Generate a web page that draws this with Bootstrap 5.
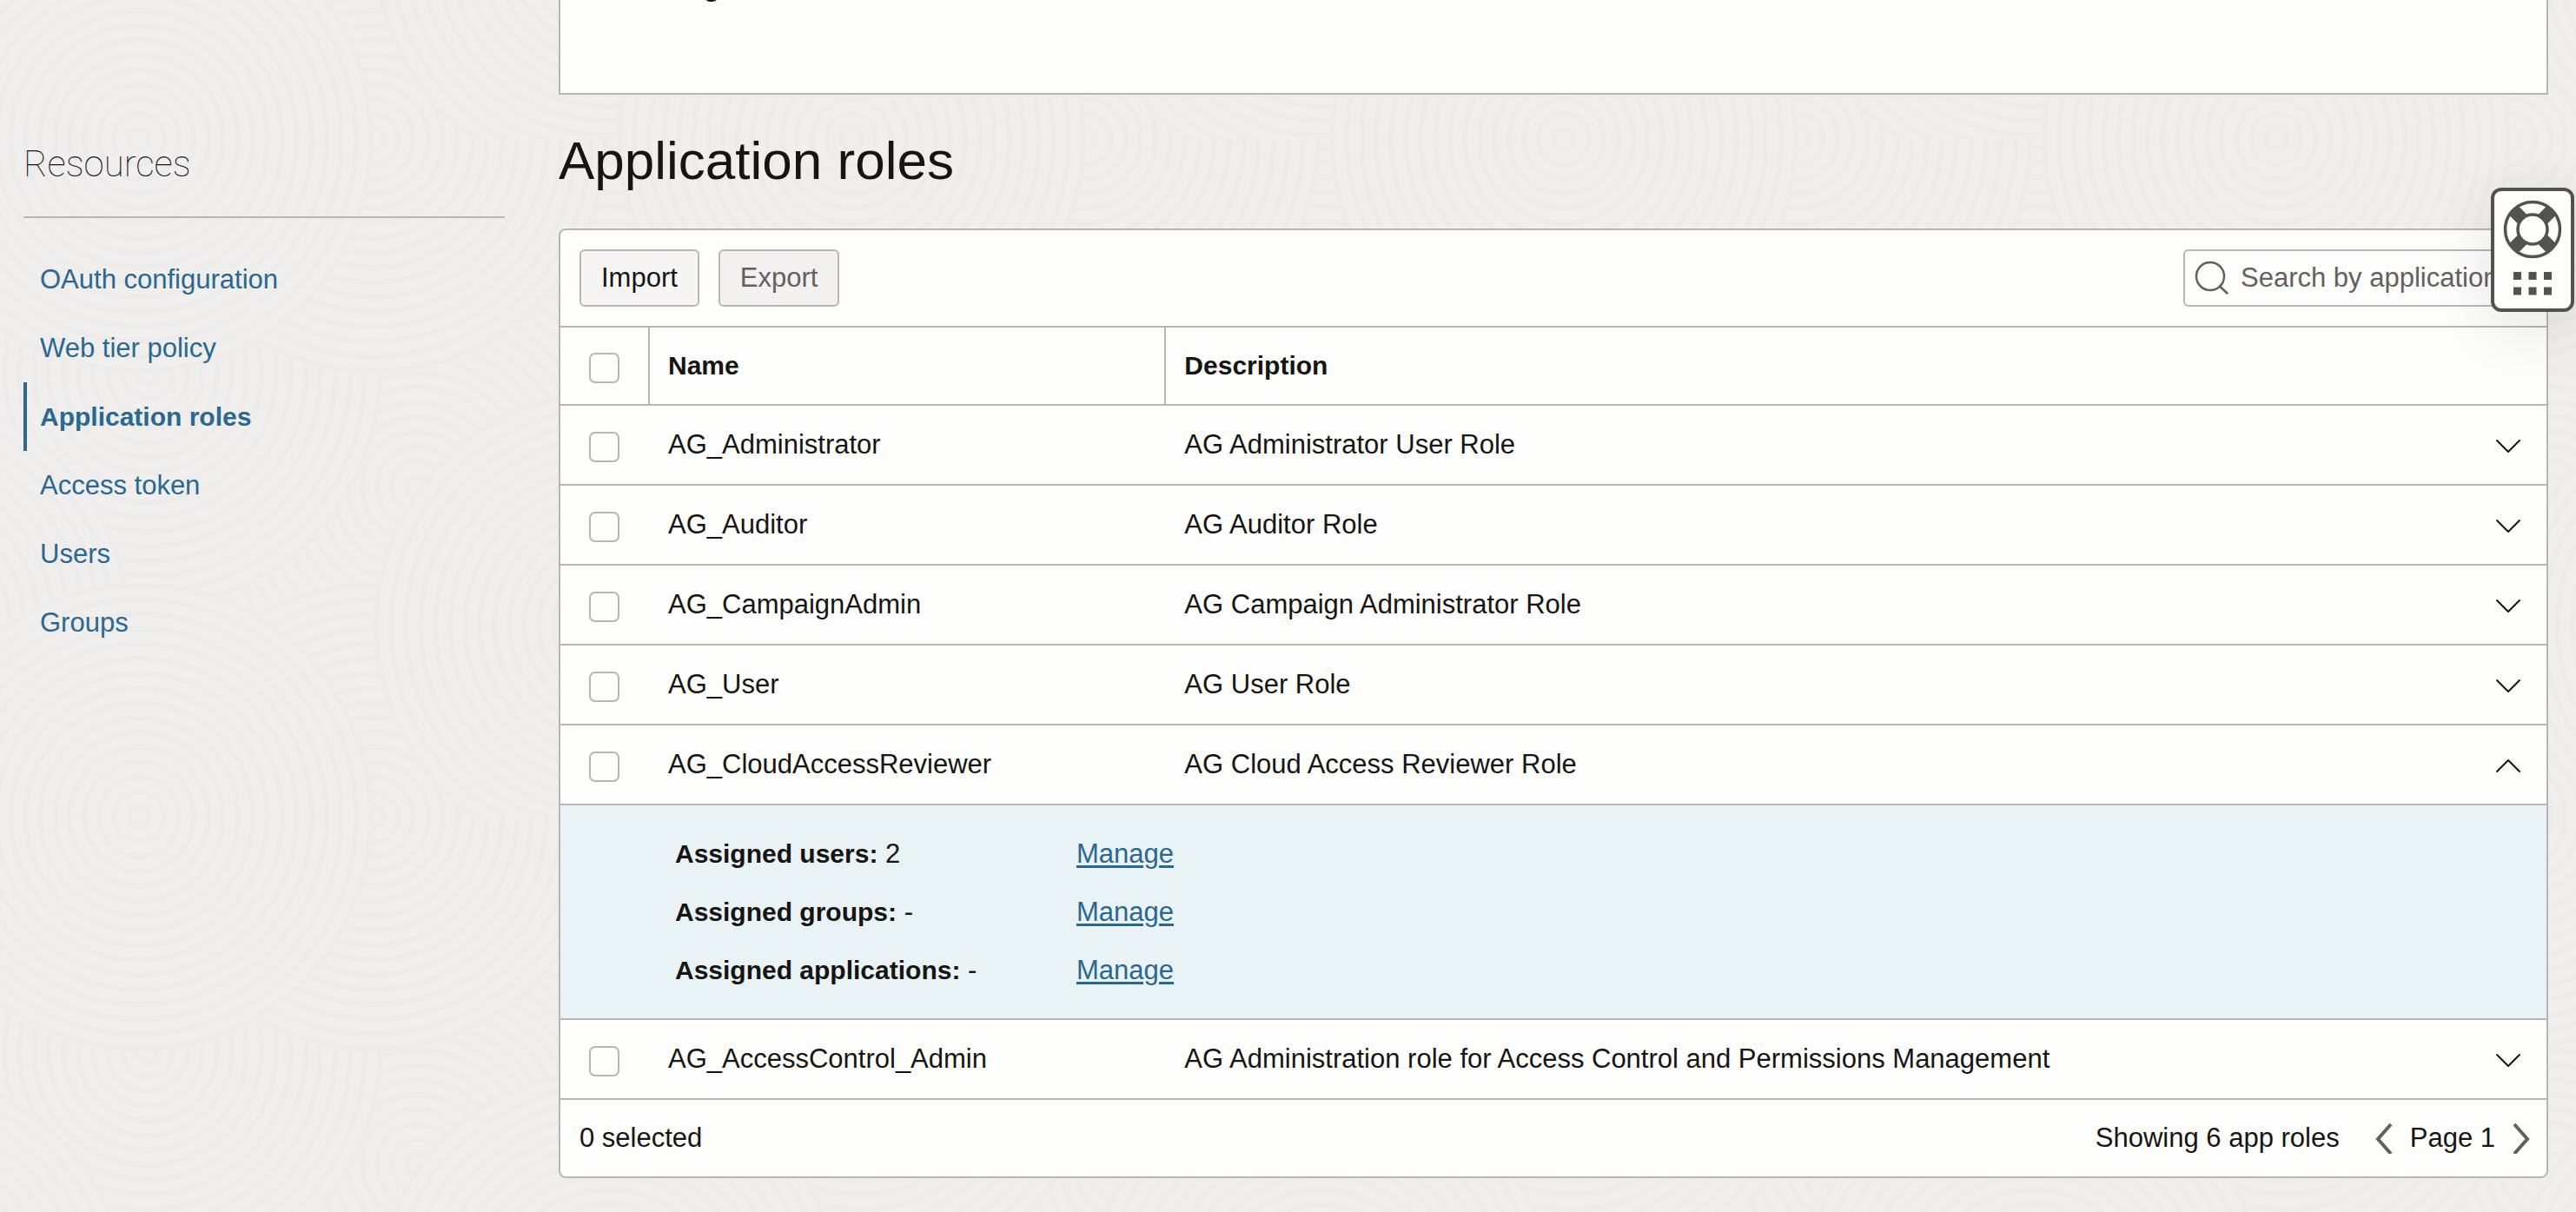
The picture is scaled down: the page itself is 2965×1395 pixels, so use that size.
<!DOCTYPE html>
<html lang="en">
<head>
<meta charset="utf-8">
<meta name="viewport" content="width=device-width, initial-scale=1">
<title>Application roles</title>
<link href="https://cdn.jsdelivr.net/npm/bootstrap@5.3.0/dist/css/bootstrap.min.css" rel="stylesheet">
<style>
:root { --line: #bbb5b1; --ink: #161513; --link: #2a688f; --paper: #fdfdfc; --muted: #665f5b; }
body { background: #f0efed; color: var(--ink); font-family: "Liberation Sans", Arial, sans-serif; font-size: 31px; line-height: 46px; }
a { color: var(--link); }
strong, th, .side-link.active { font-size: 30px; font-weight: 700; }
.backdrop { position: absolute; inset: 0; width: 100%; height: 100%; z-index: -1; }
.page { padding: 0 32px 39px 27px; gap: 62px; }
.side { flex: 0 0 554px; padding-top: 157px; }
.side-title { font-family: Roboto, "Liberation Sans", sans-serif; font-weight: 100; font-size: 42px; line-height: 64px; margin: 0; padding-bottom: 28px; border-bottom: 2px solid var(--line); }
.side-list { padding-top: 31px; }
.side-link { display: block; height: 79px; line-height: 79px; padding-left: 15px; border-left: 4px solid transparent; text-decoration: none; }
.side-link.active { border-left-color: var(--link); }
.panel { background: var(--paper); border: 2px solid var(--line); }
.panel-prev { border-top: 0; height: 109px; overflow: hidden; }
.panel-prev strong { display: block; margin: -37px 0 0 165px; }
.main-title { font-size: 62px; line-height: 76px; font-weight: 400; margin: 38px 0 40px; }
.panel-roles { border-radius: 8px; }
.tools { padding: 22px; border-bottom: 2px solid var(--line); }
.tool-set { gap: 22px; }
.tool-btn { height: 66px; padding: 0 23px; font: inherit; color: var(--ink); background: #f6f5f4; border: 2px solid var(--line); border-radius: 6px; }
.tool-btn:disabled { color: var(--muted); background: #f3f1f0; }
.search-box { width: 396px; height: 66px; gap: 13px; padding: 0 11px; background: var(--paper); border: 2px solid var(--line); border-radius: 6px; overflow: hidden; }
.search-box input { min-width: 0; flex: 1; border: 0; padding: 0; background: none; outline: 0; }
.search-box input::placeholder { color: var(--muted); opacity: 1; }
.roles { width: 100%; table-layout: fixed; border-collapse: separate; border-spacing: 0; }
.roles th, .roles td { height: 92px; padding: 0 0 0 21px; vertical-align: middle; border-bottom: 2px solid var(--line); }
.roles thead th { height: 90px; }
.roles th.ruled { border-right: 2px solid var(--line); }
.roles .pick { width: 103px; padding-left: 33px; }
.roles .named { width: 26%; }
.roles .toggle { width: 88px; padding: 0 29px 0 0; text-align: right; }
.panel-roles .form-check-input { display: block; width: 35px; height: 35px; margin: 4px 0 0; border: 2px solid var(--line); border-radius: 7px; background-color: var(--paper); }
.plain { border: 0; padding: 0; background: none; line-height: 0; color: var(--ink); }
.roles .details { padding: 22px 22px 22px 132px; background: #e9f2f5; height: auto; }
.detail-row { line-height: 67px; }
.detail-label { width: 462px; }
.detail-row a { text-decoration-thickness: 3px; text-underline-offset: 3px; }
.foot { height: 88px; padding: 0 19px 0 22px; }
.foot .plain { color: var(--muted); }
.pager { gap: 20px; margin-left: 41px; }
.help-box { position: absolute; top: 216px; right: 2px; width: 96px; height: 143px; border: 4px solid #54524e; border-radius: 12px; background: var(--paper); padding: 0; box-shadow: 0 16px 70px rgba(0,0,0,.1); }
.help-box svg { display: block; }
</style>
</head>
<body class="position-relative">
<svg class="backdrop" aria-hidden="true">
  <defs>
    <g id="rings" fill="none" stroke="#edecea" stroke-width="6">
      <circle r="270" fill="#f0efed" stroke="none"/>
      <circle r="12"/><circle r="29"/><circle r="46"/><circle r="63"/><circle r="80"/><circle r="97"/><circle r="114"/><circle r="131"/><circle r="148"/><circle r="165"/><circle r="182"/><circle r="199"/><circle r="216"/><circle r="233"/><circle r="250"/><circle r="267"/>
    </g>
    <pattern id="waves" width="820" height="780" patternUnits="userSpaceOnUse" patternTransform="translate(0 160)">
      <rect width="820" height="780" fill="#f0efed"/>
      <use href="#rings" x="700" y="260"/><use href="#rings" x="-120" y="260"/><use href="#rings" x="700" y="1040"/><use href="#rings" x="-120" y="1040"/>
      <use href="#rings" x="480" y="400"/><use href="#rings" x="150" y="260"/><use href="#rings" x="970" y="260"/>
      <use href="#rings" x="170" y="1050"/><use href="#rings" x="170" y="270"/>
      <use href="#rings" x="430" y="0"/><use href="#rings" x="430" y="780"/>
      <use href="#rings" x="700" y="560"/><use href="#rings" x="-120" y="560"/>
      <use href="#rings" x="160" y="0"/><use href="#rings" x="160" y="780"/><use href="#rings" x="980" y="0"/><use href="#rings" x="980" y="780"/>
    </pattern>
    <symbol id="down" viewBox="0 0 30 18"><path d="M2 2 15 15 28 2" fill="none" stroke="currentColor" stroke-width="2" stroke-linecap="round" stroke-linejoin="round"/></symbol>
    <symbol id="up" viewBox="0 0 30 18"><path d="M2 15 15 2 28 15" fill="none" stroke="currentColor" stroke-width="2" stroke-linecap="round" stroke-linejoin="round"/></symbol>
  </defs>
  <rect width="100%" height="100%" fill="url(#waves)"/>
</svg>

<div class="page d-flex align-items-start">
  <nav class="side" aria-labelledby="side-title">
    <h2 class="side-title" id="side-title">Resources</h2>
    <div class="side-list">
      <a class="side-link" href="#">OAuth configuration</a>
      <a class="side-link" href="#">Web tier policy</a>
      <a class="side-link active" href="#" aria-current="page">Application roles</a>
      <a class="side-link" href="#">Access token</a>
      <a class="side-link" href="#">Users</a>
      <a class="side-link" href="#">Groups</a>
    </div>
  </nav>

  <main class="flex-grow-1">
    <section class="panel panel-prev"><strong>g</strong></section>
    <h1 class="main-title">Application roles</h1>
    <section class="panel panel-roles">
      <div class="tools d-flex align-items-center">
        <div class="tool-set d-flex">
          <button class="tool-btn" type="button">Import</button>
          <button class="tool-btn" type="button" disabled>Export</button>
        </div>
        <label class="search-box d-flex align-items-center ms-auto">
          <svg width="40" height="40" viewBox="0 0 40 40" class="flex-shrink-0" fill="none" stroke="#665f5b" stroke-width="2.5" stroke-linecap="round" aria-hidden="true"><circle cx="18" cy="18" r="16"/><path d="M29 29.500 37.500 37.500"/></svg>
          <input type="search" placeholder="Search by application" aria-label="Search by application">
        </label>
      </div>
      <table class="roles">
        <thead>
          <tr>
            <th class="pick ruled"><input class="form-check-input" type="checkbox" aria-label="Select all"></th>
            <th class="named ruled" scope="col">Name</th>
            <th scope="col">Description</th>
            <th class="toggle"></th>
          </tr>
        </thead>
        <tbody>
          <tr><td class="pick"><input class="form-check-input" type="checkbox" aria-label="AG_Administrator"></td><td>AG_Administrator</td><td>AG Administrator User Role</td><td class="toggle"><button class="plain" type="button" aria-label="Expand"><svg width="30" height="18"><use href="#down"/></svg></button></td></tr>
          <tr><td class="pick"><input class="form-check-input" type="checkbox" aria-label="AG_Auditor"></td><td>AG_Auditor</td><td>AG Auditor Role</td><td class="toggle"><button class="plain" type="button" aria-label="Expand"><svg width="30" height="18"><use href="#down"/></svg></button></td></tr>
          <tr><td class="pick"><input class="form-check-input" type="checkbox" aria-label="AG_CampaignAdmin"></td><td>AG_CampaignAdmin</td><td>AG Campaign Administrator Role</td><td class="toggle"><button class="plain" type="button" aria-label="Expand"><svg width="30" height="18"><use href="#down"/></svg></button></td></tr>
          <tr><td class="pick"><input class="form-check-input" type="checkbox" aria-label="AG_User"></td><td>AG_User</td><td>AG User Role</td><td class="toggle"><button class="plain" type="button" aria-label="Expand"><svg width="30" height="18"><use href="#down"/></svg></button></td></tr>
          <tr><td class="pick"><input class="form-check-input" type="checkbox" aria-label="AG_CloudAccessReviewer"></td><td>AG_CloudAccessReviewer</td><td>AG Cloud Access Reviewer Role</td><td class="toggle"><button class="plain" type="button" aria-label="Collapse" aria-expanded="true"><svg width="30" height="18"><use href="#up"/></svg></button></td></tr>
          <tr>
            <td class="details" colspan="4">
              <div class="detail-row d-flex"><div class="detail-label"><strong>Assigned users:</strong> 2</div><a href="#">Manage</a></div>
              <div class="detail-row d-flex"><div class="detail-label"><strong>Assigned groups:</strong> -</div><a href="#">Manage</a></div>
              <div class="detail-row d-flex"><div class="detail-label"><strong>Assigned applications:</strong> -</div><a href="#">Manage</a></div>
            </td>
          </tr>
          <tr><td class="pick"><input class="form-check-input" type="checkbox" aria-label="AG_AccessControl_Admin"></td><td>AG_AccessControl_Admin</td><td>AG Administration role for Access Control and Permissions Management</td><td class="toggle"><button class="plain" type="button" aria-label="Expand"><svg width="30" height="18"><use href="#down"/></svg></button></td></tr>
        </tbody>
      </table>
      <div class="foot d-flex align-items-center">
        <span>0 selected</span>
        <span class="ms-auto">Showing 6 app roles</span>
        <div class="pager d-flex align-items-center">
          <button class="plain" type="button" aria-label="Previous page"><svg width="20" height="36" fill="none" stroke="currentColor" stroke-width="4"><path d="M18 2 3 19 18 36"/></svg></button>
          <span>Page 1</span>
          <button class="plain" type="button" aria-label="Next page"><svg width="20" height="36" fill="none" stroke="currentColor" stroke-width="4"><path d="M2 2 17 19 2 36"/></svg></button>
        </div>
      </div>
    </section>
  </main>
</div>

<button class="help-box" type="button" aria-label="Help">
  <svg width="88" height="135" viewBox="0 0 88 135" aria-hidden="true">
    <g fill="none" stroke="#54524e" transform="translate(44 44)">
      <path d="M-22-22-12-12M22-22 12-12M-22 22-12 12M22 22 12 12" stroke-width="15"/>
      <circle r="31.500" stroke-width="3.500"/><circle r="17" stroke-width="3.500" fill="#fdfdfc"/>
    </g>
    <g fill="#54524e"><path d="M22 93h9v9h-9zM39.500 93h9v9h-9zM57 93h9v9h-9zM22 110.500h9v9h-9zM39.500 110.500h9v9h-9zM57 110.500h9v9h-9z"/></g>
  </svg>
</button>
<script src="https://cdn.jsdelivr.net/npm/bootstrap@5.3.0/dist/js/bootstrap.bundle.min.js"></script>
</body>
</html>
